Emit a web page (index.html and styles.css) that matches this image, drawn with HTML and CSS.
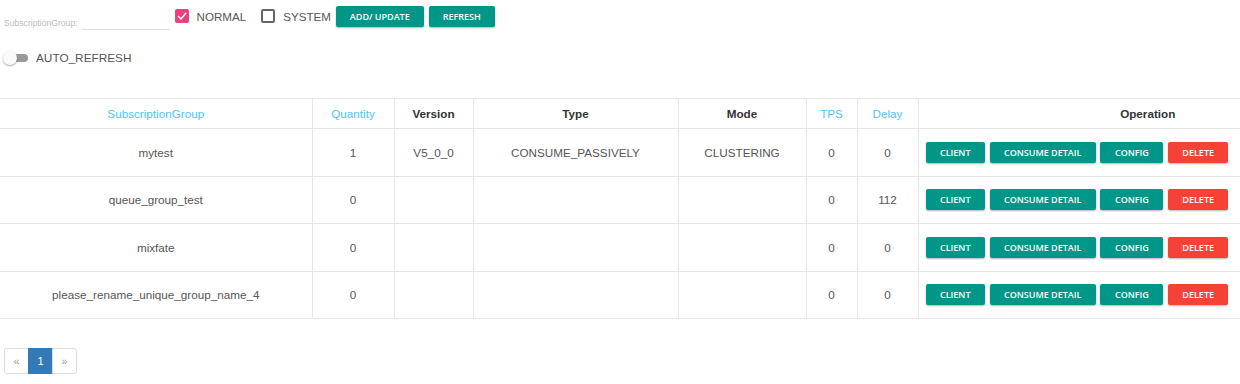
FILE: index.html
```html
<!DOCTYPE html>
<html lang="en">
<head>
  <meta charset="UTF-8">
  <title>Consumer</title>
  <link rel="stylesheet" href="styles.css">
</head>
<body>
  <div class="toolbar">
    <label class="field">
      <span class="field-label">SubscriptionGroup:</span>
      <input type="text" class="field-input">
    </label>
    <label class="check">
      <span class="box checked">
        <svg width="10" height="8" viewBox="0 0 10 8"><path d="M1 4l3 3 5-6" fill="none" stroke="#fff" stroke-width="1.4"/></svg>
      </span>
      NORMAL
    </label>
    <label class="check check-last">
      <span class="box"></span>
      SYSTEM
    </label>
    <button class="btn btn-top">ADD/ UPDATE</button>
    <button class="btn btn-top">REFRESH</button>
  </div>

  <div class="toggle-row">
    <span class="toggle"><span class="knob"></span></span>
    AUTO_REFRESH
  </div>

  <table class="grid">
    <colgroup>
      <col style="width:312px">
      <col style="width:82px">
      <col style="width:79px">
      <col style="width:205px">
      <col style="width:128px">
      <col style="width:51px">
      <col style="width:61px">
      <col>
    </colgroup>
    <thead>
      <tr>
        <th class="sort">SubscriptionGroup</th>
        <th class="sort">Quantity</th>
        <th>Version</th>
        <th>Type</th>
        <th>Mode</th>
        <th class="sort">TPS</th>
        <th class="sort">Delay</th>
        <th class="op-head">Operation</th>
      </tr>
    </thead>
    <tbody id="rows"></tbody>
  </table>

  <ul class="pager">
    <li>&laquo;</li>
    <li class="active">1</li>
    <li>&raquo;</li>
  </ul>

  <script>
    var groups = [
      ["mytest", "1", "V5_0_0", "CONSUME_PASSIVELY", "CLUSTERING", "0", "0"],
      ["queue_group_test", "0", "", "", "", "0", "112"],
      ["mixfate", "0", "", "", "", "0", "0"],
      ["please_rename_unique_group_name_4", "0", "", "", "", "0", "0"]
    ];
    var tbody = document.getElementById("rows");
    groups.forEach(function (g) {
      var tr = document.createElement("tr");
      g.forEach(function (v) {
        var td = document.createElement("td");
        td.textContent = v;
        tr.appendChild(td);
      });
      var ops = document.createElement("td");
      ops.className = "ops";
      ops.innerHTML =
        '<button class="btn">CLIENT</button>' +
        '<button class="btn">CONSUME DETAIL</button>' +
        '<button class="btn">CONFIG</button>' +
        '<button class="btn btn-danger">DELETE</button>';
      tr.appendChild(ops);
      tbody.appendChild(tr);
    });
  </script>
</body>
</html>
```

FILE: styles.css
```css
:root {
  --teal: #009688;
  --red: #f44336;
  --pink: #ec407a;
  --blue: #4fc3f7;
  --line: #e6e6e6;
  --text: #555;
}

* {
  box-sizing: border-box;
}

body {
  margin: 0;
  font-family: "Liberation Sans", Arial, sans-serif;
  color: var(--text);
  background: #fff;
}

.toolbar {
  display: flex;
  align-items: flex-start;
  padding: 6px 0 0 4px;
  height: 44px;
}

.field {
  display: flex;
  align-items: flex-end;
  height: 24px;
  margin-right: 5px;
}

.field-label {
  font-size: 8.6px;
  color: #bbb;
  margin-right: 4px;
  padding-bottom: 2px;
}

.field-input {
  width: 88px;
  border: none;
  border-bottom: 1px solid #ddd;
  outline: none;
  padding: 0;
  height: 16px;
}

.check {
  display: flex;
  align-items: center;
  font-size: 11.6px;
  color: #555;
  margin-top: 3px;
  margin-right: 15px;
}

.check-last {
  margin-right: 5px;
}

.box {
  width: 14px;
  height: 14px;
  border: 2px solid #666;
  border-radius: 2px;
  margin-right: 8px;
  display: flex;
  align-items: center;
  justify-content: center;
}

.box.checked {
  background: var(--pink);
  border-color: var(--pink);
}

.btn {
  font-family: "Open Sans", "Liberation Sans", sans-serif;
  font-size: 9px;
  font-weight: 600;
  color: #fff;
  background: var(--teal);
  border: none;
  border-radius: 2px;
  box-shadow: 0 1px 2px rgba(0, 0, 0, 0.3);
  padding: 0 14.5px;
  height: 21px;
  cursor: pointer;
}

.btn-top {
  margin-right: 5px;
  padding: 0 14px;
}

.btn-danger {
  background: var(--red);
}

.toggle-row {
  display: flex;
  align-items: center;
  padding-left: 4px;
  font-size: 11.8px;
  color: #555;
  height: 28px;
}

.toggle {
  position: relative;
  width: 24px;
  height: 8px;
  background: #999;
  border-radius: 4px;
  margin-right: 8px;
}

.knob {
  position: absolute;
  left: -1px;
  top: -3px;
  width: 14px;
  height: 14px;
  border-radius: 50%;
  background: #fafafa;
  box-shadow: 0 1px 2px rgba(0, 0, 0, 0.35);
}

.grid {
  margin-top: 26px;
  width: 100%;
  border-collapse: collapse;
  table-layout: fixed;
  font-size: 11.7px;
}

.grid th,
.grid td {
  border: 1px solid var(--line);
  text-align: center;
  white-space: nowrap;
}

.grid tr > :first-child {
  border-left: none;
}

.grid tr > :last-child {
  border-right: none;
}

.grid th {
  height: 30px;
  color: #333;
  font-weight: bold;
}

.grid th.sort {
  color: var(--blue);
  font-weight: normal;
}

.grid th.op-head {
  padding-left: 138px;
}

.grid td {
  height: 47.5px;
}

.grid td.ops {
  text-align: left;
  padding-left: 7px;
  font-size: 0;
}

.ops .btn {
  margin-right: 4.5px;
}

.pager {
  list-style: none;
  margin: 29px 0 0 4px;
  padding: 0;
  display: flex;
  font-size: 11px;
}

.pager li {
  width: 25px;
  height: 26px;
  display: flex;
  align-items: center;
  justify-content: center;
  border: 1px solid #ddd;
  margin-left: -1px;
  color: #999;
}

.pager li:first-child {
  margin-left: 0;
  border-radius: 3px 0 0 3px;
}

.pager li:last-child {
  border-radius: 0 3px 3px 0;
}

.pager li.active {
  background: #337ab7;
  border-color: #337ab7;
  color: #fff;
}
```
